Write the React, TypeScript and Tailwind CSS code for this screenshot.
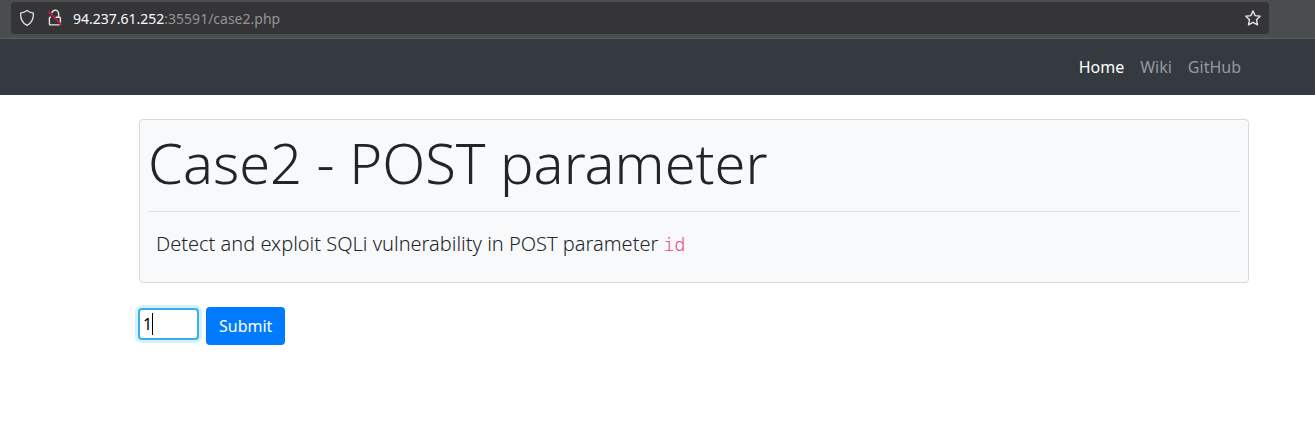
import React from "react";

function ShieldIcon() {
  return (
    <svg width="16" height="18" viewBox="0 0 16 18" fill="none" stroke="#e3e3e5" strokeWidth="1.3" strokeLinejoin="round" aria-hidden="true">
      <path d="M8 1.4C6.6 2.9 4.4 3.6 1.6 4.2C1.4 9.4 3 13.9 8 16.3C13 13.9 14.6 9.4 14.4 4.2C11.6 3.6 9.4 2.9 8 1.4Z" />
    </svg>
  );
}

function InsecureLockIcon() {
  return (
    <svg width="16" height="18" viewBox="0 0 16 18" fill="none" aria-hidden="true">
      <path d="M4.8 4.2a3.3 3.3 0 0 1 6.8 1v3.1" stroke="#e3e3e5" strokeWidth="1.5" />
      <path d="M4 8.3H3.2a.8.8 0 0 0-.8.8v6a.8.8 0 0 0 .8.8h9.4M8.6 8.3h4a.8.8 0 0 1 .8.8v4.4" stroke="#e3e3e5" strokeWidth="1.4" />
      <path d="M1.2 2.6 14.6 16" stroke="#e5123f" strokeWidth="1.4" />
    </svg>
  );
}

function StarIcon() {
  return (
    <svg width="18" height="18" viewBox="0 0 18 18" fill="none" stroke="#e3e3e5" strokeWidth="1.4" strokeLinejoin="round" aria-hidden="true">
      <path d="M9 1.9 11.1 6.6 16.2 7.2 12.5 10.7 13.5 15.8 9 13.3 4.5 15.8 5.5 10.7 1.8 7.2 6.9 6.6Z" />
    </svg>
  );
}

function AddressBar() {
  return (
    <div className="border-b border-[#5c5f62] bg-[#4a4d50] pt-0.5 pr-[46px] pb-1 pl-[11px]">
      <div className="flex h-8 items-center rounded bg-[#353538] pr-[7px] pl-2">
        <ShieldIcon />
        <span className="ml-3 flex">
          <InsecureLockIcon />
        </span>
        <p className="ml-2.5 flex-1 pt-0.5 font-['Noto_Sans',sans-serif] text-sm text-[#949496]">
          <span className="text-[#fbfbfe]">94.237.61.252</span>:35591/case2.php
        </p>
        <button type="button" aria-label="Bookmark this page">
          <StarIcon />
        </button>
      </div>
    </div>
  );
}

export default function App() {
  return (
    <div className="min-h-screen bg-white font-['Noto_Sans',sans-serif] text-base text-[#212529]">
      <AddressBar />
      <nav className="flex h-14 items-center justify-end gap-4 bg-[#353a41] pr-[74px]">
        <a href="#home" className="text-white">Home</a>
        <a href="#wiki" className="text-[#97999d]">Wiki</a>
        <a href="#github" className="text-[#97999d]">GitHub</a>
      </nav>
      <main className="pt-6 pr-[66px] pl-[139px]">
        <section className="rounded border border-[#d7d9db] bg-[#f8f9fb] px-2 pt-2 pb-[22px]">
          <h1 className="text-[56px] leading-[68px] font-light">Case2 - POST parameter</h1>
          <hr className="mt-[15px] mb-4 border-[#dedfe1]" />
          <p className="pl-2 text-xl leading-8 font-light">
            Detect and exploit SQLi vulnerability in POST parameter{" "}
            <code className="font-['Noto_Sans_Mono','DejaVu_Sans_Mono',monospace] text-lg leading-none text-[#e83e8c]">id</code>
          </p>
        </section>
        <form className="mt-6 flex items-start gap-[7px]" onSubmit={(event) => event.preventDefault()}>
          <div className="relative -ml-px pt-px">
            <input
              type="text"
              name="id"
              aria-label="id"
              defaultValue="1"
              className="block h-8 w-[61px] rounded-sm border-2 border-[#3daee9] bg-white px-[3px] text-black ring-3 ring-[#cff4fe] outline-none"
            />
            <span className="absolute top-1.5 left-3.5 h-[22px] w-px bg-black" />
          </div>
          <button type="submit" className="h-[38px] rounded bg-[#007bff] px-[13px] text-white">
            Submit
          </button>
        </form>
      </main>
    </div>
  );
}
